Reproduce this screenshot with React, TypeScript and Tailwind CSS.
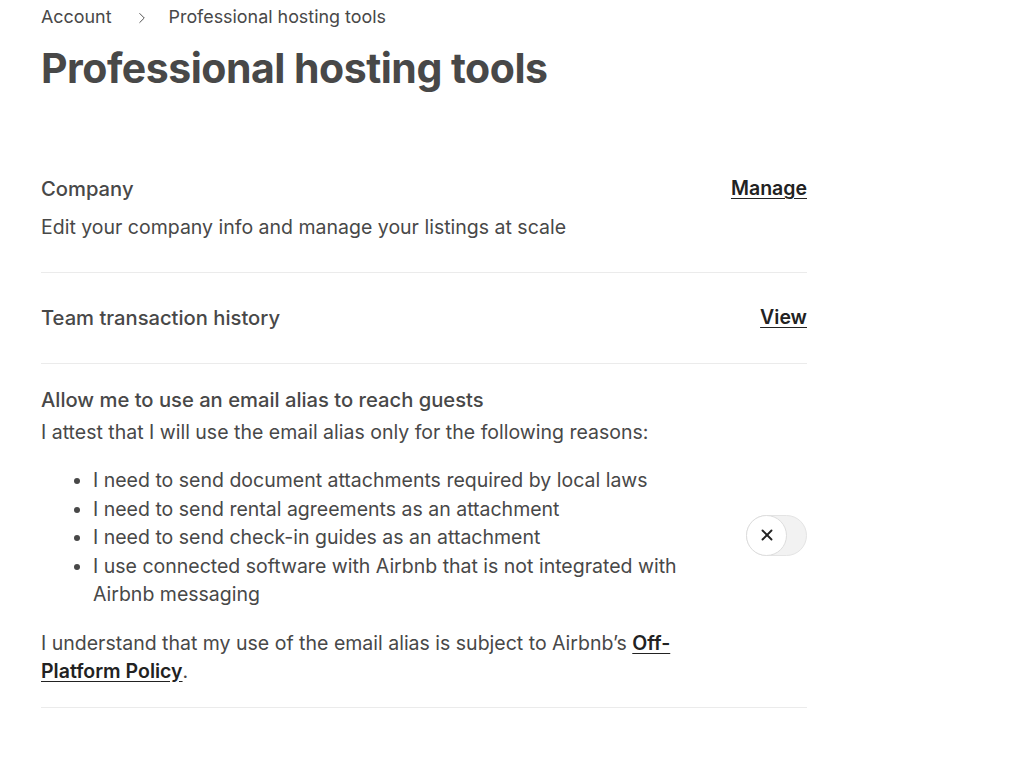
import { ChevronRight, X } from "lucide-react";

const reasons = [
  "I need to send document attachments required by local laws",
  "I need to send rental agreements as an attachment",
  "I need to send check-in guides as an attachment",
  "I use connected software with Airbnb that is not integrated with Airbnb messaging",
];

export default function App() {
  return (
    <div className="min-h-screen bg-white text-[#484848]" style={{ fontFamily: "Inter, 'Noto Sans', sans-serif" }}>
      <div className="w-[766px] ml-[41px]">
        {/* Breadcrumb */}
        <nav className="flex items-center h-[35px] text-[17.9px] text-[#484848]">
          <span>Account</span>
          <ChevronRight className="w-[18px] h-[18px] ml-[21px] mr-[18px] text-[#484848]" strokeWidth={1.25} />
          <span>Professional hosting tools</span>
        </nav>

        <h1 className="mt-[9px] text-[41px] leading-[48px] font-bold tracking-[-0.5px] text-[#484848]">
          Professional hosting tools
        </h1>

        <div className="mt-[81px]">
          {/* Company */}
          <section className="pb-[31px] border-b border-[#ebebeb]">
            <div className="flex items-center justify-between h-[32px]">
              <h2 className="text-[20.2px] font-medium">Company</h2>
              <a href="#" className="text-[19.5px] font-semibold text-[#222] underline underline-offset-[3px]">
                Manage
              </a>
            </div>
            <p className="mt-[8px] text-[19.5px] leading-[28px]">
              Edit your company info and manage your listings at scale
            </p>
          </section>

          {/* Team transaction history */}
          <section className="flex items-center justify-between h-[91px] border-b border-[#ebebeb]">
            <h2 className="text-[20.2px] font-medium">Team transaction history</h2>
            <a href="#" className="text-[19.5px] font-semibold text-[#222] underline underline-offset-[3px]">
              View
            </a>
          </section>

          {/* Email alias */}
          <section className="pt-[20px] pb-[22px] border-b border-[#ebebeb]">
            <h2 className="text-[20.2px] leading-[32px] font-medium">Allow me to use an email alias to reach guests</h2>
            <div className="flex items-center justify-between">
              <div className="w-[660px]">
                <p className="mt-[2px] text-[19.5px] leading-[28px]">
                  I attest that I will use the email alias only for the following reasons:
                </p>
                <ul className="mt-[20px] pl-[52px] list-disc text-[19.5px] leading-[28.5px] marker:text-[#484848]">
                  {reasons.map((r) => (
                    <li key={r}>{r}</li>
                  ))}
                </ul>
              </div>
              <button
                aria-label="Toggle email alias"
                className="relative w-[61px] h-[41px] rounded-full bg-[#f2f2f2] border border-[#e4e4e4] mt-[46px]"
              >
                <span className="absolute -left-px -top-px w-[41px] h-[41px] rounded-full bg-white border border-[#dddddd] flex items-center justify-center">
                  <X className="w-[18px] h-[18px] text-[#222]" strokeWidth={2.5} />
                </span>
              </button>
            </div>
            <p className="mt-[20px] text-[19.5px] leading-[28px] w-[640px]">
              I understand that my use of the email alias is subject to Airbnb’s{" "}
              <a href="#" className="font-semibold text-[#222] underline underline-offset-[3px]">
                Off-Platform Policy
              </a>
              .
            </p>
          </section>
        </div>
      </div>
    </div>
  );
}
